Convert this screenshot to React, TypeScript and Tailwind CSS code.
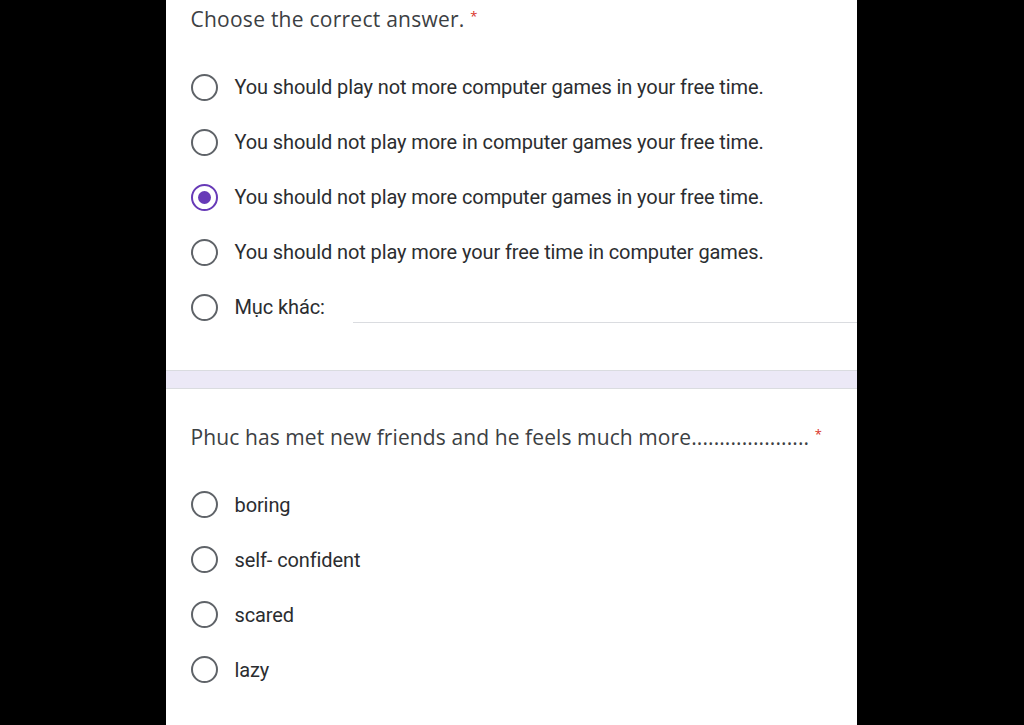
import React from 'react';

const Radio: React.FC<{ checked?: boolean }> = ({ checked }) => (
  <span
    className={
      'flex h-[27px] w-[27px] shrink-0 items-center justify-center rounded-full border-[2.5px] ' +
      (checked ? 'border-[#673ab7]' : 'border-[#5f6368]')
    }
  >
    {checked && <span className="h-[13px] w-[13px] rounded-full bg-[#673ab7]" />}
  </span>
);

const Option: React.FC<{ label: string; checked?: boolean; other?: boolean }> = ({ label, checked, other }) => (
  <div className="flex h-[55px] items-center">
    <div className="flex w-[44px] justify-start">
      <Radio checked={checked} />
    </div>
    <span className="text-[20px] tracking-[-0.1px] text-[#2b2d30] [font-family:Roboto,sans-serif]">{label}</span>
    {other && <div className="ml-[28px] mt-[30px] h-px flex-1 bg-[#dadce0]" />}
  </div>
);

const Required = () => <span className="relative top-[-6px] text-[13px] text-[#d93025]">*</span>;

export default function App() {
  const q1 = [
    'You should play not more computer games in your free time.',
    'You should not play more in computer games your free time.',
    'You should not play more computer games in your free time.',
    'You should not play more your free time in computer games.',
  ];
  const q2 = ['boring', 'self- confident', 'scared', 'lazy'];

  return (
    <div className="flex h-[725px] w-[1024px] justify-center overflow-hidden bg-black">
      <div className="mr-[2px] flex w-[691px] flex-col bg-white">
        {/* Question 1 */}
        <div className="pl-[25px]">
          <div className="pt-[4px] text-[21px] tracking-[0.25px] text-[#3c4043] [font-family:'Open_Sans',sans-serif]">
            Choose the correct answer. <Required />
          </div>
          <div className="mt-[24px]">
            {q1.map((t, i) => (
              <Option key={i} label={t} checked={i === 2} />
            ))}
            <Option label="Mục khác:" other />
          </div>
        </div>

        <div className="mt-[35px] h-[19px] border-y border-[#dadce0] bg-[#ece9f7]" />

        {/* Question 2 */}
        <div className="pl-[25px]">
          <div className="mt-[33px] text-[21px] tracking-[0.1px] text-[#3c4043] [font-family:'Open_Sans',sans-serif]">
            Phuc has met new friends and he feels much more..................... <Required />
          </div>
          <div className="mt-[24px]">
            {q2.map((t, i) => (
              <Option key={i} label={t} />
            ))}
          </div>
        </div>
      </div>
    </div>
  );
}
